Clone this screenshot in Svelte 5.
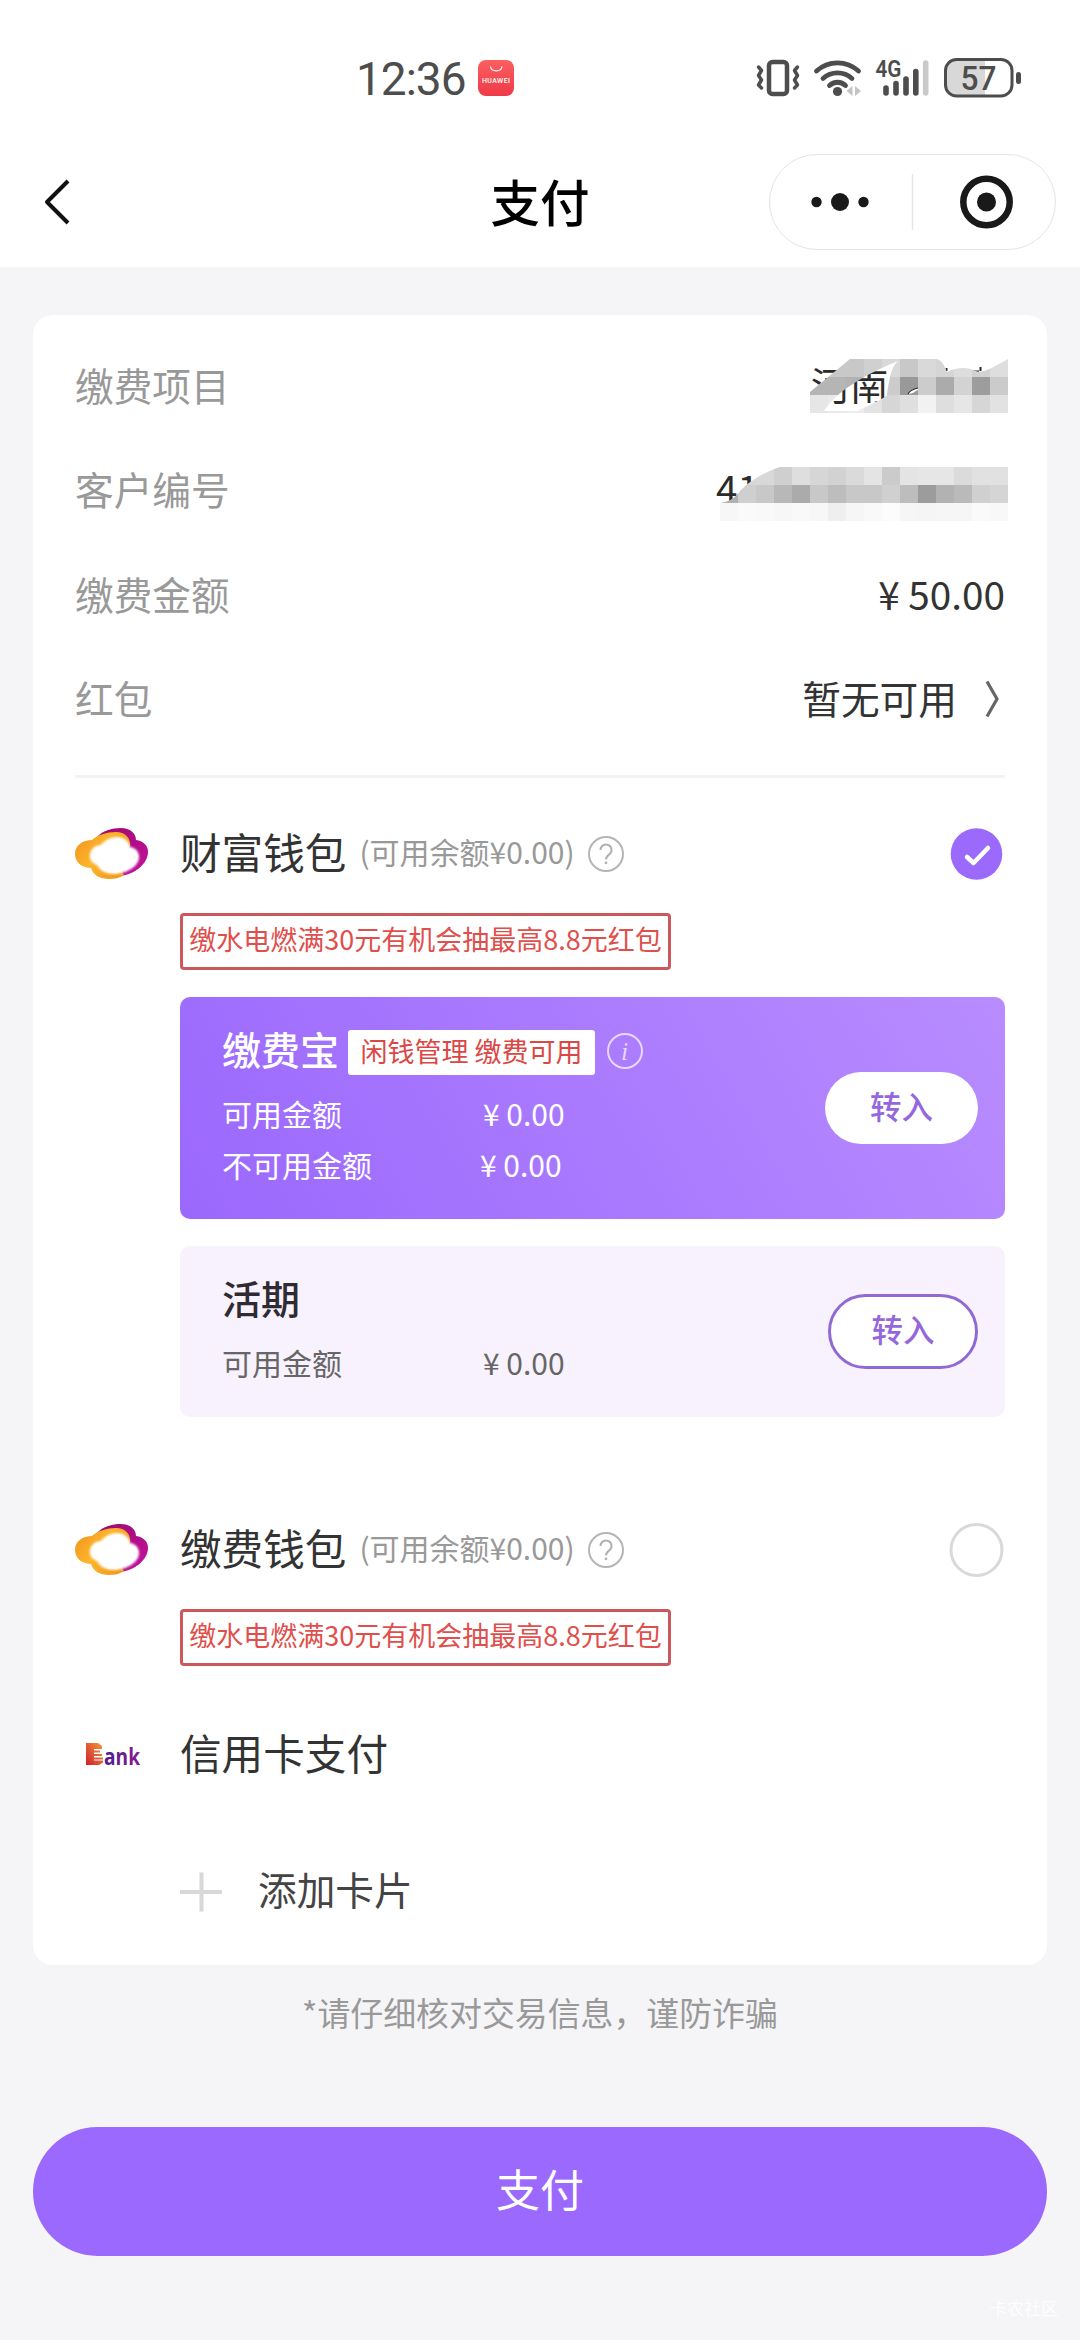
<script>
  let selected = "wealth";

  const promo = "缴水电燃满30元有机会抽最高8.8元红包";

  const wallets = [
    {
      id: "wealth",
      name: "财富钱包",
      accounts: [
        {
          name: "缴费宝",
          tag: "闲钱管理 缴费可用",
          primary: true,
          lines: [
            ["可用金额", "0.00"],
            ["不可用金额", "0.00"],
          ],
        },
        { name: "活期", lines: [["可用金额", "0.00"]] },
      ],
    },
    { id: "fee", name: "缴费钱包", accounts: [] },
  ];

  // grey levels of the masked values, one row per line of blocks
  const projectMask = [
    [200, 200, 200, 208, 217, 200, 217, 213, 221, 210, 222],
    [181, 181, 178, 181, 204, 153, 204, 171, 211, 157, 203],
    [230, 234, 236, 227, 214, 223, 242, 222, 230, 214, 226],
  ];
  const customerMask = [
    [216, 216, 216, 207, 222, 214, 210, 218, 228, 203, 228, 230, 230, 219, 225, 225],
    [176, 207, 200, 184, 171, 200, 189, 200, 200, 208, 189, 156, 178, 186, 208, 213],
    [247, 250, 249, 247, 249, 247, 239, 246, 249, 252, 246, 245, 246, 246, 250, 248],
  ];
</script>

<div class="page">
  <div class="status">
    <span class="time">12:36</span>
    <svg class="shop" width="36" height="36" viewBox="0 0 36 36">
      <defs>
        <linearGradient id="shop" x1="0" y1="0" x2="0" y2="1">
          <stop offset="0" stop-color="#fb5f60" />
          <stop offset="1" stop-color="#ee3a47" />
        </linearGradient>
      </defs>
      <rect width="36" height="36" rx="8" fill="url(#shop)" />
      <path d="M12.500 6.500a5.800 5 0 0 0 11.500 0" fill="none" stroke="#fff" stroke-width="1.200" />
      <text x="4" y="23" font-size="7" font-weight="500" fill="#fff" textLength="28">HUAWEI</text>
    </svg>
    <svg class="signals" width="268" height="44" viewBox="756 56 268 44">
      <g fill="none" stroke="#4d4d4d" stroke-linecap="round" stroke-linejoin="round">
        <rect x="769" y="62" width="18" height="32" rx="3.500" stroke-width="4.500" />
        <path d="M758.500 67l3 3.500-3 5 3 4.500-3 5 3 3" stroke-width="3.500" />
        <path d="M797.500 67l-3 3.500 3 5-3 4.500 3 5-3 3" stroke-width="3.500" />
        <path d="M816.500 71a31 31 0 0 1 42 0" stroke-width="4.800" />
        <path d="M823 78.500a21.500 21.500 0 0 1 29 0" stroke-width="4.800" />
        <path d="M829.500 85.500a11.500 11.500 0 0 1 16 0" stroke-width="4.800" />
        <path d="M886 88v5M896 83.500v9.500M906 79v14M915.800 71.500v21.500" stroke-width="5.600" />
        <path d="M925.700 63v30" stroke="#cacaca" stroke-width="5.600" />
      </g>
      <circle cx="837.500" cy="91.500" r="4.600" fill="#4d4d4d" />
      <path d="M852.500 86v10l-6-5zM855 86v10l6-5z" fill="#c4c4c4" />
      <text x="875.500" y="77" font-size="23" font-weight="600" fill="#4d4d4d" textLength="26" lengthAdjust="spacingAndGlyphs">4G</text>
      <path d="M956 59.500h29v36.500h-29a10.500 10.500 0 0 1-10.500-10.500v-15.500a10.500 10.500 0 0 1 10.500-10.500z" fill="#d8d8d8" />
      <rect x="945.500" y="59.500" width="66.500" height="36.500" rx="11" fill="none" stroke="#4d4d4d" stroke-width="3" />
      <rect x="1016" y="72" width="5" height="12" rx="2.500" fill="#4d4d4d" />
      <text x="960.500" y="90" font-size="34" font-weight="500" fill="#4d4d4d" textLength="36" lengthAdjust="spacingAndGlyphs">57</text>
    </svg>
  </div>

  <div class="nav">
    <svg class="back" width="30" height="50" viewBox="0 0 30 50">
      <path d="M26 4L5 25l21 21" fill="none" stroke="#111" stroke-width="4" stroke-linejoin="round" />
    </svg>
    <h1>支付</h1>
    <div class="capsule">
      <svg width="285" height="94" viewBox="0 0 285 94">
        <g fill="#191919">
          <circle cx="46.500" cy="47" r="5.200" />
          <circle cx="70" cy="47" r="9" />
          <circle cx="93.500" cy="47" r="5.200" />
          <circle cx="216.500" cy="47" r="9.500" />
        </g>
        <path d="M142.500 19v56" stroke="#e6e6e6" stroke-width="1.500" />
        <circle cx="216.500" cy="47" r="23.200" fill="none" stroke="#191919" stroke-width="6.500" />
      </svg>
    </div>
  </div>

  <div class="card">
    <div class="row">
      <span class="label">缴费项目</span>
      <svg class="masked" width="198" height="54" viewBox="0 0 198 54">
        <clipPath id="projectClip">
          <path d="M0 33L40 0h53C60 13 28 30 14 52h33c18-8 29-14 30-16 1-9 4-28 10-33 2-2 4-3 6-3h33c6 1 8 6 11 13 8-4 16-5 24-3 10 5 12 4 37-10v54H0z" />
        </clipPath>
        <text x="1" y="40.500" font-size="38.700" fill="#2b2b2b">河南</text>
        <path d="M81 17l3 3M136.500 9v3M160 12.500h9M170.500 8v4" stroke="#2b2b2b" stroke-width="2" />
        <g clip-path="url(#projectClip)" shape-rendering="crispEdges">
          {#each projectMask as line, y}
            {#each line as v, x}
              <rect x={x * 18} y={y * 18} width="18" height="18" fill="rgb({v},{v},{v})" />
            {/each}
          {/each}
        </g>
        <path d="M98 35c2-4 5-5 10-6v2c-3 1-5 4-10 4z" fill="#fff" />
        <path d="M98 35c2-4 5-5 10-6" fill="none" stroke="#2b2b2b" stroke-width="1.200" />
      </svg>
    </div>
    <div class="row">
      <span class="label">客户编号</span>
      <svg class="masked low" width="288" height="54" viewBox="0 0 288 54">
        <clipPath id="customerClip">
          <path d="M0 36c12-2 15-6 20-12C29 14 45 5 60 0h228v54H0z" />
        </clipPath>
        <text x="-4" y="37" font-size="38.700" fill="#2b2b2b">41</text>
        <g clip-path="url(#customerClip)" shape-rendering="crispEdges">
          {#each customerMask as line, y}
            {#each line as v, x}
              <rect x={x * 18} y={y * 18} width="18" height="18" fill="rgb({v},{v},{v})" />
            {/each}
          {/each}
        </g>
      </svg>
    </div>
    <div class="row">
      <span class="label">缴费金额</span>
      <span>¥ 50.00</span>
    </div>
    <div class="row">
      <span class="label">红包</span>
      <span class="coupon">
        暂无可用
        <svg width="20" height="42" viewBox="0 0 20 42">
          <path d="M5 5.500l10 17.500L5 40.500" fill="none" stroke="#666" stroke-width="3.200" />
        </svg>
      </span>
    </div>
    <div class="divider"></div>

    {#each wallets as wallet}
      <div class="wallet">
        <div class="heading">
          <svg class="icon" width="74" height="52" viewBox="0 0 74 52">
            <defs>
              <linearGradient id="gold" x1="0" y1="0" x2="1" y2="0.6">
                <stop offset="0" stop-color="#f0901c" />
                <stop offset="0.5" stop-color="#fdb52c" />
                <stop offset="1" stop-color="#f09a20" />
              </linearGradient>
              <linearGradient id="plum" x1="0" y1="0" x2="1" y2="1">
                <stop offset="0" stop-color="#9c0a6c" />
                <stop offset="1" stop-color="#c411a0" />
              </linearGradient>
              <filter id="soft" x="-20%" y="-20%" width="140%" height="140%">
                <feGaussianBlur stdDeviation="1.300" />
              </filter>
            </defs>
            <path d="M22 9C27 3 37 0 46 0c9 0 15 5 15 12 8 1 12 6 12 12 0 12-14 23-29 24-8 1-15-1-19-5z" fill="url(#plum)" />
            <path d="M17 12C22 7 32 4 41 4c9 0 15 6 14 14L40 30l9 17c-5 3-9 4-15 4-9 0-16-4-18-11C8 40 0 35 0 26c0-9 8-14 17-14z" fill="url(#gold)" />
            <path d="M26 17c4-5 10-8 16-8 7 0 12 4 13 10 6 1 9 5 9 10 0 9-11 16-24 17-9 0-15-3-18-9-5-2-8-6-7-11 1-5 5-9 11-9z" fill="#fff" filter="url(#soft)" />
          </svg>
          <span class="name">{wallet.name}</span>
          <span class="balance">(可用余额¥0.00)</span>
          <svg class="help" width="38" height="38" viewBox="0 0 38 38">
            <circle cx="19" cy="19" r="17" fill="none" stroke="#b5b5b5" stroke-width="2" />
            <path d="M13.500 15a5.500 5.500 0 1 1 8.500 4.600c-2 1.400-3 2.200-3 5" fill="none" stroke="#b0b0b0" stroke-width="2" />
            <circle cx="19" cy="27.800" r="1.400" fill="#b0b0b0" />
          </svg>
          <button class="radio" aria-label={wallet.name} on:click={() => (selected = wallet.id)}>
            <svg width="56" height="56" viewBox="0 0 56 56">
              {#if selected == wallet.id}
                <circle cx="27.500" cy="28" r="25.800" fill="#9b69fb" />
                <path d="M18 31l6.500 6 14.500-15" fill="none" stroke="#fff" stroke-width="4.500" stroke-linecap="round" stroke-linejoin="round" />
              {:else}
                <circle cx="27.500" cy="28" r="25.500" fill="none" stroke="#d9d9d9" stroke-width="3" />
              {/if}
            </svg>
          </button>
        </div>
        <div class="body">
          <div class="promo">{promo}</div>
          {#each wallet.accounts as account}
            <div class="account" class:primary={account.primary}>
              <div class="info">
                <div class="title">
                  <b>{account.name}</b>
                  {#if account.tag}
                    <span class="tag">{account.tag}</span>
                    <svg width="38" height="38" viewBox="0 0 38 38">
                      <circle cx="19" cy="19" r="17" fill="none" stroke="#e6d8ff" stroke-width="2" />
                      <text x="18.500" y="27.500" text-anchor="middle" class="i">i</text>
                    </svg>
                  {/if}
                </div>
                {#each account.lines as [label, amount], i}
                  <div class="line">
                    <span>{label}</span>
                    <span class:second={i == 1}>¥ {amount}</span>
                  </div>
                {/each}
              </div>
              <button class="transfer">转入</button>
            </div>
          {/each}
        </div>
      </div>
    {/each}

    <div class="heading credit">
      <svg class="icon" width="74" height="50" viewBox="0 0 74 50">
        <defs>
          <linearGradient id="bankB" x1="0" y1="1" x2="1" y2="0">
            <stop offset="0" stop-color="#cf1f2c" />
            <stop offset="1" stop-color="#f59a3c" />
          </linearGradient>
          <linearGradient id="bankText" x1="0" y1="0" x2="1" y2="0">
            <stop offset="0" stop-color="#4b1c8c" />
            <stop offset="1" stop-color="#8a1d92" />
          </linearGradient>
        </defs>
        <path d="M11 13h12l4 3v3h-8v1.500h6v2h-6v1.500h8v2h-8v1.500h9v2h-9v1h9v2l-4 2.500H11z" fill="url(#bankB)" />
        <text class="ank" x="29" y="34.500" textLength="36" lengthAdjust="spacingAndGlyphs" fill="url(#bankText)">ank</text>
      </svg>
      <span class="name">信用卡支付</span>
    </div>

    <div class="add">
      <svg width="42" height="42" viewBox="0 0 42 42">
        <path d="M0 22h42M21.500 2.500v39" stroke="#d8d8d8" stroke-width="4" />
      </svg>
      <span>添加卡片</span>
    </div>
  </div>

  <p class="notice">*请仔细核对交易信息，谨防诈骗</p>
  <button class="pay">支付</button>
  <div class="watermark">卡农社区</div>
</div>

<style>
  :global(body) {
    margin: 0;
    background: #f5f5f8;
  }

  .page {
    width: 1080px;
    height: 2340px;
    overflow: hidden;
    background: #f5f5f8;
    font-family: "Noto Sans CJK SC", sans-serif;
    color: #333;
    display: flex;
    flex-direction: column;
  }

  svg {
    display: block;
    flex: none;
  }

  button {
    padding: 0;
    border: none;
    background: none;
    font-family: inherit;
  }

  .status {
    flex: none;
    height: 135px;
    padding: 56px 0 0 356px;
    box-sizing: border-box;
    display: flex;
    align-items: flex-start;
    background: #fff;
  }

  .status text {
    font-family: Roboto, sans-serif;
  }

  .time {
    width: 122px;
    font-family: Roboto, sans-serif;
    font-size: 46px;
    line-height: 46px;
    letter-spacing: -1px;
    color: #4d4d4d;
  }

  .shop {
    margin-top: 4px;
  }

  .signals {
    margin-left: 242px;
  }

  .nav {
    height: 132px;
    flex: none;
    display: grid;
    grid-template-columns: 1fr auto 1fr;
    align-items: center;
    padding: 2px 24px 0;
    box-sizing: border-box;
    background: #fff;
  }

  .back {
    margin-left: 18px;
  }

  h1 {
    margin: 0;
    padding-bottom: 3px;
    font-size: 49.5px;
    font-weight: 500;
    line-height: 60px;
    color: #000;
  }

  .capsule {
    justify-self: end;
    width: 285px;
    height: 94px;
    border: 1.5px solid #e4e4e4;
    border-radius: 48px;
  }

  .card {
    flex: none;
    height: 1650px;
    margin: 48px 33px 0;
    padding: 17px 42px 0;
    box-sizing: border-box;
    border-radius: 20px;
    background: #fff;
  }

  .row {
    display: flex;
    align-items: center;
    justify-content: space-between;
    height: 104.5px;
    font-size: 38.7px;
    line-height: 56px;
  }

  .row span {
    padding-bottom: 1px;
  }

  .label {
    color: #999;
  }

  .masked {
    overflow: visible;
    margin: 4px -3px 0 0;
  }

  .masked.low {
    margin-top: 10px;
  }

  .coupon {
    display: flex;
    align-items: center;
    gap: 25px;
    padding-right: 3px;
  }

  .divider {
    height: 3px;
    margin: 25px 0 46px;
    background: #f3f3f4;
  }

  .heading {
    display: flex;
    align-items: center;
    height: 60px;
  }

  .icon {
    margin-right: 31px;
  }

  .name {
    padding-bottom: 6px;
    font-size: 41.6px;
    line-height: 60px;
  }

  .balance {
    margin: 0 12px 0 13px;
    padding-bottom: 7px;
    font-size: 30px;
    line-height: 44px;
    color: #999;
  }

  .radio {
    margin-left: auto;
    width: 56px;
    height: 56px;
  }

  .body {
    display: flex;
    flex-direction: column;
    gap: 27px;
    margin: 29px 0 0 105px;
  }

  .promo {
    align-self: flex-start;
    width: 491px;
    height: 57px;
    box-sizing: border-box;
    border: 3px solid #cb595b;
    border-radius: 4px;
    text-align: center;
    font-size: 27px;
    line-height: 46px;
    white-space: nowrap;
    color: #df4f4c;
  }

  .wallet + .wallet {
    margin-top: 103px;
  }

  .account {
    display: flex;
    justify-content: space-between;
    height: 171px;
    padding: 0 27px 0 42px;
    box-sizing: border-box;
    border-radius: 10px;
    background: #f8f2ff;
    color: #666;
  }

  .account.primary {
    height: 222px;
    background: linear-gradient(60deg, #9b68fd, #b88cff);
    color: #fff;
  }

  .info {
    padding-top: 27px;
  }

  .title {
    display: flex;
    align-items: center;
    height: 54px;
    margin-bottom: 12px;
  }

  .title b {
    padding-bottom: 6px;
    font-size: 39px;
    line-height: 54px;
    font-weight: 500;
    color: #2e2b33;
  }

  .primary .title b {
    color: #fff;
  }

  .tag {
    width: 247px;
    height: 45px;
    margin: 3px 11px 0 9px;
    border-radius: 3px;
    background: #fff;
    text-align: center;
    font-size: 27px;
    line-height: 41px;
    color: #db4744;
  }

  .i {
    font: italic 26px "Liberation Serif", serif;
    fill: #e6d8ff;
  }

  .line {
    display: flex;
    height: 51px;
    font-size: 30px;
    line-height: 46px;
  }

  .line span:first-child {
    width: 261px;
  }

  .second {
    margin-left: -3px;
  }

  .transfer {
    align-self: center;
    width: 150px;
    height: 75px;
    box-sizing: border-box;
    border: 3px solid #9169d3;
    border-radius: 38px;
    background: #fff;
    font-size: 31.5px;
    font-weight: 500;
    line-height: 60px;
    padding-bottom: 7px;
    color: #9467dd;
  }

  .primary .transfer {
    width: 153px;
    height: 72px;
    border: none;
  }

  .credit {
    margin-top: 59px;
  }

  .ank {
    font: 700 23px "Open Sans", sans-serif;
  }

  .add {
    display: flex;
    align-items: center;
    gap: 36px;
    height: 60px;
    margin-top: 76px;
    font-size: 38.7px;
    line-height: 56px;
    padding-left: 105px;
    color: #444;
  }

  .add span {
    padding-bottom: 6px;
  }

  .notice {
    margin: 24px 0 92px;
    text-align: center;
    font-size: 32.9px;
    line-height: 46px;
    color: #999;
  }

  .pay {
    flex: none;
    height: 129px;
    margin: 0 33px;
    border-radius: 65px;
    background: #9b69fd;
    font-size: 44px;
    line-height: 120px;
    padding-bottom: 7px;
    color: #fff;
  }

  .watermark {
    margin: 40px 22px 0 auto;
    font-size: 17px;
    line-height: 24px;
    color: #fdfdfe;
  }
</style>
